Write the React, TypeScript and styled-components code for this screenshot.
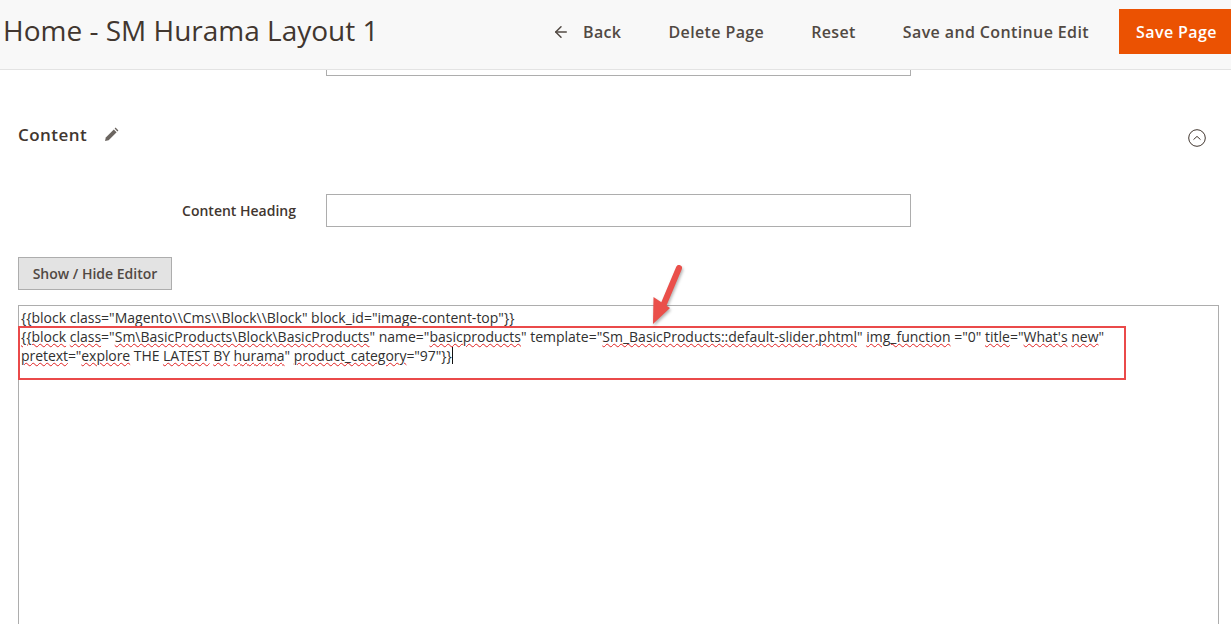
import React from "react";
import styled, { createGlobalStyle } from "styled-components";
import { ArrowLeft } from "lucide-react";

const GlobalStyle = createGlobalStyle`
  html, body {
    margin: 0;
    padding: 0;
    height: 624px;
    overflow: hidden;
    background: #ffffff;
    font-family: "Open Sans", "Noto Sans", sans-serif;
    color: #41362f;
  }
  * { box-sizing: border-box; }
`;

const Page = styled.div`
  position: relative;
  width: 1231px;
  height: 624px;
  overflow: hidden;
`;

const Header = styled.header`
  display: flex;
  align-items: flex-start;
  justify-content: space-between;
  height: 70px;
  padding: 8px 0 0 3px;
  background: #f8f8f8;
  border-bottom: 1px solid #e3e3e3;
`;

const Title = styled.h1`
  margin: 0;
  font-size: 28px;
  font-weight: 400;
  line-height: 44px;
  color: #41362f;
  white-space: nowrap;
`;

const Actions = styled.div`
  display: flex;
  align-items: center;
  height: 45px;
  margin-top: 1px;
`;

const ActionLink = styled.button`
  display: flex;
  align-items: center;
  gap: 13px;
  margin-left: 47px;
  padding: 0;
  border: 0;
  background: none;
  font: 600 16px "Open Sans", sans-serif;
  letter-spacing: 0.38px;
  color: #514943;
  white-space: nowrap;
`;

const SaveButton = styled.button`
  width: 112px;
  height: 45px;
  margin-left: 30px;
  padding: 0 0 0 3px;
  border: 0;
  background: #eb5202;
  color: #ffffff;
  font: 600 16px "Open Sans", sans-serif;
  letter-spacing: 0.4px;
  white-space: nowrap;
`;

const Body = styled.main`
  padding: 0 12px 0 18px;
`;

const PrevInput = styled.div`
  width: 585px;
  height: 6px;
  margin-left: 308px;
  border: 1px solid #adadad;
  border-top: 0;
`;

const SectionHead = styled.div`
  display: flex;
  align-items: center;
  justify-content: space-between;
  height: 32px;
  margin-top: 43px;
  padding: 0 13px 2px 0;
`;

const SectionTitle = styled.div`
  display: flex;
  align-items: center;
  gap: 17px;
  font-size: 17px;
  font-weight: 600;
  letter-spacing: 0.45px;
  color: #41362f;
`;

const CollapseSvg = styled.svg`
  margin-top: 8px;
`;

const Field = styled.div`
  display: flex;
  align-items: center;
  margin-top: 43px;
`;

const FieldLabel = styled.label`
  width: 278px;
  font-size: 14px;
  font-weight: 600;
  text-align: right;
  color: #41362f;
`;

const TextInput = styled.div`
  width: 585px;
  height: 33px;
  margin-left: 30px;
  border: 1px solid #adadad;
  background: #ffffff;
`;

const EditorToggle = styled.button`
  display: block;
  width: 154px;
  height: 33px;
  margin-top: 30px;
  padding: 0;
  border: 1px solid #adadad;
  background: #e3e3e3;
  font: 600 14px "Open Sans", sans-serif;
  color: #514943;
`;

const Editor = styled.div`
  width: 1201px;
  height: 330px;
  margin-top: 15px;
  padding: 2px 2px;
  border: 1px solid #adadad;
  font-size: 14px;
  line-height: 19px;
  color: #303030;
`;

const TightLine = styled.span`
  letter-spacing: -0.065px;
`;

const Misspelt = styled.span`
  text-decoration: underline wavy #e02020 0.7px;
  text-underline-offset: 1px;
`;

const Caret = styled.span`
  display: inline-block;
  width: 1px;
  height: 17px;
  margin-bottom: -3px;
  background: #111111;
`;

const Highlight = styled.div`
  position: absolute;
  left: 18px;
  top: 326px;
  width: 1108px;
  height: 54px;
  border: 2px solid #ea4a4a;
  pointer-events: none;
`;

const Arrow = styled.svg`
  position: absolute;
  left: 645px;
  top: 262px;
  pointer-events: none;
  filter: drop-shadow(1px 2px 1.5px rgba(0, 0, 0, 0.3));
`;

const PencilIcon = () => (
  <svg width="15" height="15" viewBox="0 0 15 15">
    <path d="M1 14l.8-3.6 8-8 2.8 2.8-8 8z" fill="#6b6560" />
    <path d="M10.6 1.6l1-1 2.8 2.8-1 1z" fill="#6b6560" />
  </svg>
);

const CollapseIcon = () => (
  <CollapseSvg width="18" height="18" viewBox="0 0 18 18" fill="none" stroke="#41362f">
    <circle cx="9" cy="9" r="8.3" />
    <path d="M5.5 10.6L9 7.4l3.5 3.2" />
  </CollapseSvg>
);

const App = () => {
  return (
    <Page>
      <GlobalStyle />
      <Header>
        <Title>Home - SM Hurama Layout 1</Title>
        <Actions>
          <ActionLink>
            <ArrowLeft size={18} strokeWidth={2} />
            Back
          </ActionLink>
          <ActionLink>Delete Page</ActionLink>
          <ActionLink>Reset</ActionLink>
          <ActionLink>Save and Continue Edit</ActionLink>
          <SaveButton>Save Page</SaveButton>
        </Actions>
      </Header>
      <Body>
        <PrevInput />
        <SectionHead>
          <SectionTitle>
            Content
            <PencilIcon />
          </SectionTitle>
          <CollapseIcon />
        </SectionHead>
        <Field>
          <FieldLabel>Content Heading</FieldLabel>
          <TextInput />
        </Field>
        <EditorToggle>Show / Hide Editor</EditorToggle>
        <Editor>
          {'{{block class="Magento\\\\Cms\\\\Block\\\\Block" block_id="image-content-top"}}'}
          <br />
          <Misspelt>{"{{block"}</Misspelt> <Misspelt>class</Misspelt>
          {'="'}
          <Misspelt>{"Sm\\BasicProducts\\Block\\BasicProducts"}</Misspelt>
          {'" name="'}
          <Misspelt>basicproducts</Misspelt>
          {'" template="'}
          <Misspelt>{"Sm_BasicProducts::"}</Misspelt>
          <Misspelt>{"default-slider.phtml"}</Misspelt>
          {'" '}
          <Misspelt>img_function</Misspelt>
          {' ="0" '}
          <Misspelt>title</Misspelt>
          {'="'}
          <Misspelt>What's</Misspelt> <Misspelt>new</Misspelt>
          {'"'}
          <br />
          <TightLine>
            <Misspelt>pretext</Misspelt>
            {'="'}
            <Misspelt>explore</Misspelt> THE <Misspelt>LATEST</Misspelt> <Misspelt>BY</Misspelt>{" "}
            <Misspelt>hurama</Misspelt>
            {'" '}
            <Misspelt>product_category</Misspelt>
            {'="97"}}'}
          </TightLine>
          <Caret />
        </Editor>
      </Body>
      <Highlight />
      <Arrow width="44" height="66" viewBox="0 0 44 66">
        <path d="M34 6L18 44" stroke="#ea4f4a" strokeWidth="6" strokeLinecap="round" fill="none" />
        <path d="M8 62L8.5 35 25 46z" fill="#ea4f4a" />
      </Arrow>
    </Page>
  );
};

export default App;
